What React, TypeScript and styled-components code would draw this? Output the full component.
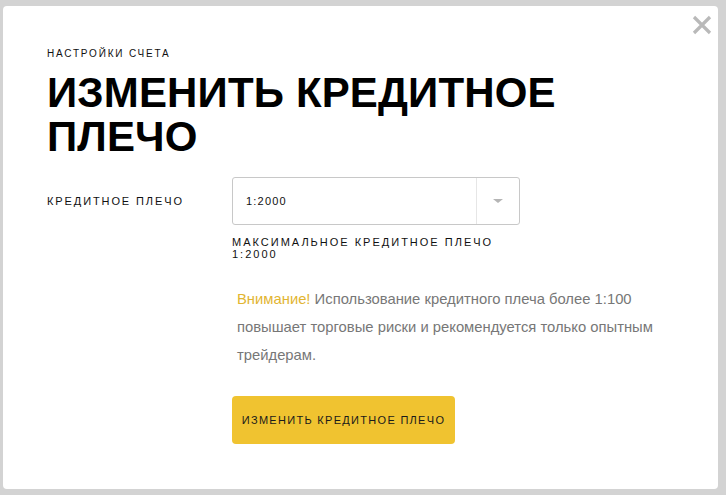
import styled, { createGlobalStyle } from 'styled-components';

const GlobalStyle = createGlobalStyle`
  html, body {
    margin: 0;
    padding: 0;
    background: #d3d3d3;
    font-family: "Liberation Sans", Arial, sans-serif;
  }
`;

function CloseIcon() {
  return (
    <svg width="20" height="20" viewBox="0 0 20 20">
      <path d="M2 2 L18 18 M18 2 L2 18" stroke="#b9b9b9" strokeWidth="3.2" strokeLinecap="butt" />
    </svg>
  );
}

export default function App() {
  return (
    <>
      <GlobalStyle />
      <Page>
        <Modal>
          <CloseButton aria-label="close">
            <CloseIcon />
          </CloseButton>
          <Eyebrow>Настройки счета</Eyebrow>
          <Title>Изменить кредитное плечо</Title>
          <FormRow>
            <Label>Кредитное плечо</Label>
            <Field>
              <Select>
                <SelectValue>1:2000</SelectValue>
                <SelectArrow>
                  <Caret />
                </SelectArrow>
              </Select>
              <Hint>
                Максимальное кредитное плечо
                <br />
                1:2000
              </Hint>
              <Warning>
                <Accent>Внимание!</Accent> Использование кредитного плеча более 1:100 повышает торговые
                риски и рекомендуется только опытным трейдерам.
              </Warning>
              <SubmitButton>Изменить кредитное плечо</SubmitButton>
            </Field>
          </FormRow>
        </Modal>
      </Page>
    </>
  );
}

const Page = styled.div`
  padding: 6px 8px 6px 3px;
  height: 495px;
  box-sizing: border-box;
`;

const Modal = styled.div`
  position: relative;
  background: #fff;
  border-radius: 4px;
  height: 100%;
  box-sizing: border-box;
  padding: 42px 44px 0 44px;
`;

const CloseButton = styled.button`
  position: absolute;
  top: 9px;
  right: 6px;
  border: 0;
  background: none;
  padding: 0;
  cursor: pointer;
  line-height: 0;
`;

const Eyebrow = styled.div`
  font-size: 10px;
  letter-spacing: 1.8px;
  text-transform: uppercase;
  color: #111;
  line-height: 12px;
`;

const Title = styled.h1`
  margin: 11px 0 0;
  font-size: 42px;
  line-height: 44px;
  font-weight: 700;
  text-transform: uppercase;
  letter-spacing: 0.15px;
  color: #000;
  max-width: 540px;
`;

const FormRow = styled.div`
  display: flex;
  margin-top: 18px;
`;

const Label = styled.div`
  width: 185px;
  flex-shrink: 0;
  height: 48px;
  display: flex;
  align-items: center;
  font-size: 11px;
  letter-spacing: 1.9px;
  text-transform: uppercase;
  color: #111;
`;

const Field = styled.div`
  display: flex;
  flex-direction: column;
  align-items: flex-start;
`;

const Select = styled.div`
  width: 288px;
  height: 48px;
  box-sizing: border-box;
  border: 1px solid #c8c8c8;
  border-radius: 3px;
  display: flex;
  align-items: stretch;
`;

const SelectValue = styled.div`
  flex: 1;
  display: flex;
  align-items: center;
  padding-left: 13px;
  font-size: 11px;
  letter-spacing: 1.2px;
  color: #111;
`;

const SelectArrow = styled.div`
  width: 42px;
  border-left: 1px solid #e6e6e6;
  display: flex;
  align-items: center;
  justify-content: center;
`;

const Caret = styled.span`
  width: 0;
  height: 0;
  border-left: 5px solid transparent;
  border-right: 5px solid transparent;
  border-top: 4px solid #b5b5b5;
`;

const Hint = styled.div`
  margin-top: 11px;
  font-size: 11px;
  line-height: 12px;
  letter-spacing: 2px;
  text-transform: uppercase;
  color: #111;
`;

const Warning = styled.p`
  margin: 25px 0 0;
  padding-left: 5px;
  width: 450px;
  font-size: 14.8px;
  line-height: 28px;
  color: #777;
`;

const Accent = styled.span`
  color: #e2b532;
`;

const SubmitButton = styled.button`
  margin-top: 27px;
  height: 48px;
  padding: 0;
  width: 223px;
  border: 0;
  border-radius: 4px;
  background: #f0c330;
  font-family: "Liberation Sans", Arial, sans-serif;
  font-size: 11px;
  letter-spacing: 1.3px;
  text-transform: uppercase;
  white-space: nowrap;
  color: #1a1a1a;
  cursor: pointer;
`;
